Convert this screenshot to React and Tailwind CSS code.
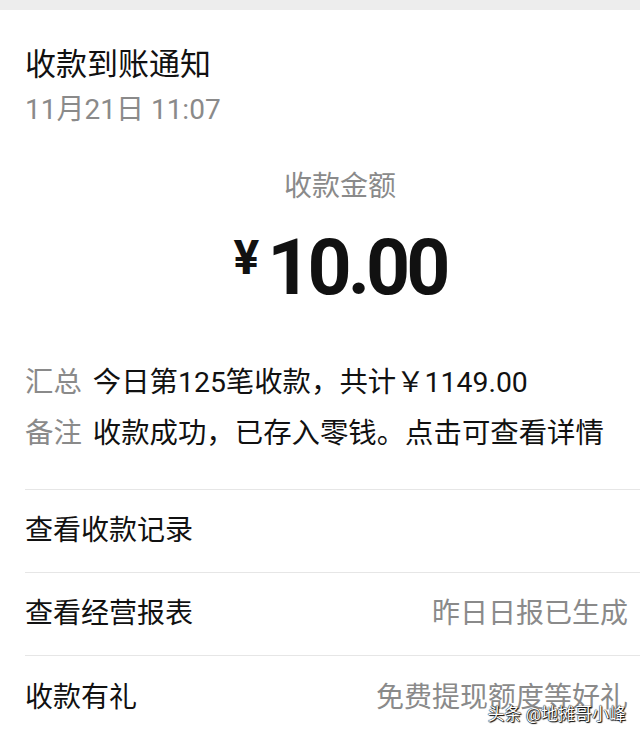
const font = { fontFamily: 'Roboto, "Noto Sans CJK SC", "Noto Sans", sans-serif' }

function Row({ label, value, last }) {
  return (
    <div className={`flex items-center justify-between h-[83px] pr-[12px] ${last ? '' : 'border-b border-[#e6e6e6]'}`}>
      <span className="text-[28px] text-[#111] leading-none">{label}</span>
      {value && <span className="text-[28px] text-[#8a8a8a] leading-none">{value}</span>}
    </div>
  )
}

export default function App() {
  return (
    <div className="relative w-[640px] h-[735px] bg-white overflow-hidden" style={font}>
      <div className="h-[10px] bg-[#ededed]" />
      <div className="pl-[25px]">
        <div className="pt-[36px] text-[31px] leading-[38px] text-[#111]">收款到账通知</div>
        <div className="mt-[8px] text-[28px] leading-[35px] text-[#8a8a8a]">11月21日 11:07</div>

        <div className="flex flex-col items-center pl-[15px]">
          <div className="mt-[42px] text-[28px] leading-[35px] text-[#8a8a8a]">收款金额</div>
          <div className="mt-[26px] flex items-start font-bold text-[#111] leading-none">
            <span className="text-[48px] mt-[4px] mr-[8px]">¥</span>
            <span className="text-[77px] tracking-[-4px]">10.00</span>
          </div>
        </div>

        <div className="mt-[58px] flex flex-col gap-[15px] text-[28.4px] leading-[36px]">
          <div className="flex gap-[11px]">
            <span className="text-[#8a8a8a]">汇总</span>
            <span className="text-[#111]">今日第125笔收款，共计￥1149.00</span>
          </div>
          <div className="flex gap-[11px]">
            <span className="text-[#8a8a8a]">备注</span>
            <span className="text-[#111]">收款成功，已存入零钱。点击可查看详情</span>
          </div>
        </div>

        <div className="mt-[37px] border-t border-[#e6e6e6]">
          <Row label="查看收款记录" />
          <Row label="查看经营报表" value="昨日日报已生成" />
          <Row label="收款有礼" value="免费提现额度等好礼" last />
        </div>
      </div>

      <div
        className="absolute right-[14px] bottom-[12px] text-[17px] leading-none text-white"
        style={{ textShadow: '0 0 1px #000, 0 0 1px #000, 1px 1px 1px #000' }}
      >
        头条 @地摊哥小峰
      </div>
    </div>
  )
}
